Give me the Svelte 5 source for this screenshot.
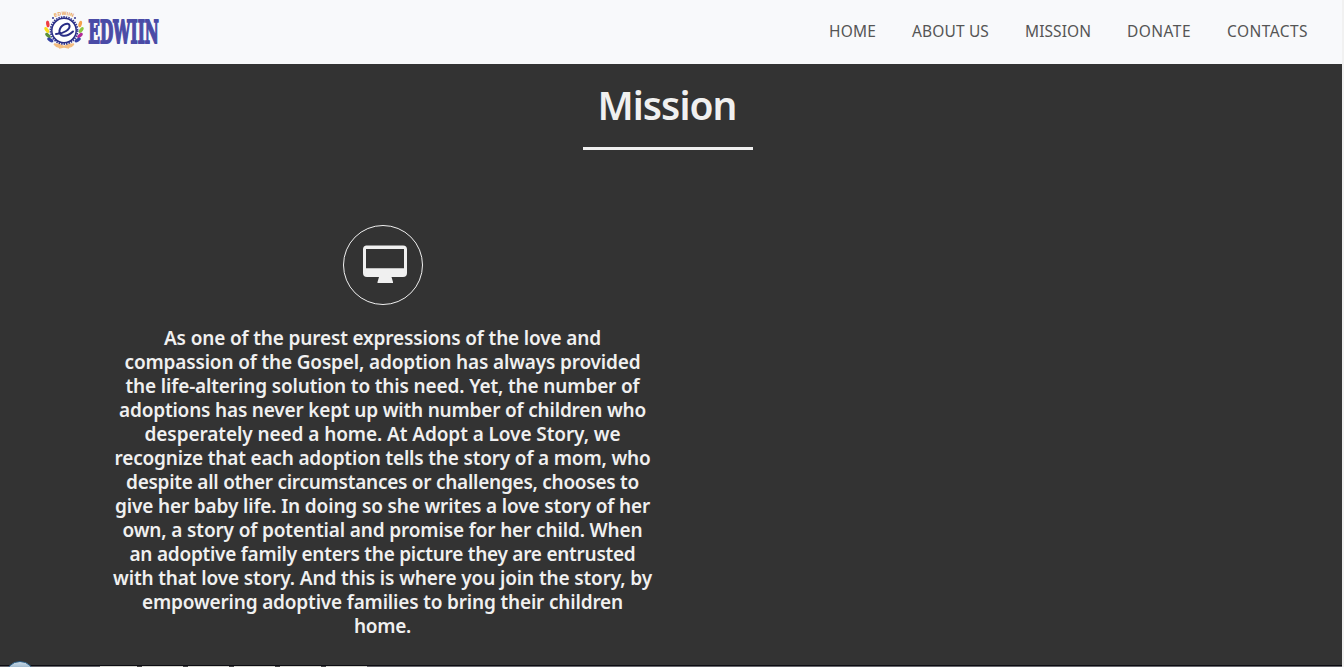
<script>
  const links = [
    { label: 'HOME', width: 47 },
    { label: 'ABOUT US', width: 77 },
    { label: 'MISSION', width: 66 },
    { label: 'DONATE', width: 64 },
    { label: 'CONTACTS', width: 81 }
  ];
  const lines = [
    { text: 'As one of the purest expressions of the love and', width: 437 },
    { text: 'compassion of the Gospel, adoption has always provided', width: 516 },
    { text: 'the life-altering solution to this need. Yet, the number of', width: 514 },
    { text: 'adoptions has never kept up with number of children who', width: 527 },
    { text: 'desperately need a home. At Adopt a Love Story, we', width: 476 },
    { text: 'recognize that each adoption tells the story of a mom, who', width: 536 },
    { text: 'despite all other circumstances or challenges, chooses to', width: 513 },
    { text: 'give her baby life. In doing so she writes a love story of her', width: 535 },
    { text: 'own, a story of potential and promise for her child. When', width: 520 },
    { text: 'an adoptive family enters the picture they are entrusted', width: 506 },
    { text: 'with that love story. And this is where you join the story, by', width: 539 },
    { text: 'empowering adoptive families to bring their children', width: 481 },
    { text: 'home.', width: 57 }
  ];
  const leaves = [
    { x: 3.8, y: 16, r: -8, c: '#ef3e42' },
    { x: 2.8, y: 22, r: -35, c: '#f8dc18' },
    { x: 4, y: 27.5, r: -48, c: '#5b8f3d' },
    { x: 6.3, y: 32, r: -60, c: '#3443a5' },
    { x: 36.2, y: 16, r: 15, c: '#f4a24a' },
    { x: 37.2, y: 22, r: 35, c: '#8bc63f' },
    { x: 36, y: 27.5, r: 48, c: '#b22b97' },
    { x: 33.7, y: 32, r: 60, c: '#3443a5' }
  ];
  const tiles = [37, 5, 41, 5, 41, 5, 41, 5, 41, 5, 41];

  // Tracks a run of text so that it fills the given measure.
  function fit(node, width) {
    const natural = node.getBoundingClientRect().width;
    node.style.letterSpacing = `${(width - natural) / node.textContent.length}px`;
  }
</script>

<div class="page">
  <header>
    <svg class="logo" width="126" height="44" viewBox="0 0 126 44">
      {#each leaves as l}
        <ellipse cx={l.x} cy={l.y} rx="1.7" ry="3.4" fill={l.c} transform={`rotate(${l.r} ${l.x} ${l.y})`} />
      {/each}
      <path d="M10 36q6 0 9 2-5 3-9-2m20 0q-6 0-9 2 5 3 9-2M15 40l9-2m1 2-9-2" fill="#f3bd80" stroke="#f3bd80" stroke-width="1.5" />
      <circle cx="20" cy="22.500" r="13.500" fill="none" stroke="#34378f" stroke-width="1.800" stroke-dasharray="1.5 1" />
      <circle cx="20" cy="22.500" r="12.200" fill="#fff" stroke="#292d85" stroke-width="1.500" />
      <path d="M12 26c7 0 14.500-4.500 13.500-8.500s-9-.5-10 5 6 8 13.500 1" fill="none" stroke="#292d85" stroke-width="2" stroke-linecap="round" />
      <path id="arch" d="M8 10.500Q20 3.500 32 10.500" fill="none" />
      <text class="arch-text"><textPath href="#arch" startOffset="50%" text-anchor="middle">EDWIIN</textPath></text>
      <circle cx="9" cy="10" r="1" fill="#34378f" />
      <circle cx="31" cy="10" r="1" fill="#34378f" />
      <text class="brand" x="44.300" y="35.300" textLength="70.500" lengthAdjust="spacingAndGlyphs">EDWIIN</text>
    </svg>
    <nav>
      {#each links as l}
        <a href="#top" style:width={`${l.width}px`}><span use:fit={l.width}>{l.label}</span></a>
      {/each}
    </nav>
  </header>

  <main>
    <h1><span use:fit={139}>Mission</span></h1>
    <div class="rule"></div>
    <section>
      <div class="badge">
        <svg width="46" height="40" viewBox="0 0 46 40">
          <path fill="#f0f0f0" fill-rule="evenodd" d="M4 .5h37a4 4 0 0 1 4 4V28a4 4 0 0 1-4 4H29.500l1.500 5v1H15.500v-1l1.500-5H5a4 4 0 0 1-4-4V4.500a4 4 0 0 1 3-4ZM4 4v19.300h38V4Z" />
        </svg>
      </div>
      <p>
        {#each lines as l}
          <span class="line"><span use:fit={l.width}>{l.text}</span></span>
        {/each}
      </p>
    </section>
  </main>

  <footer>
    <div class="tiles">
      {#each tiles as w, i}
        <i class:light={i % 2 === 0} style:width={`${w}px`}></i>
      {/each}
    </div>
    <div class="orb"></div>
  </footer>
</div>

<style>
  :global(body) { background: #f1f1f1; overflow: hidden; }
  .page {
    width: 1342px;
    height: 667px;
    display: flex;
    flex-direction: column;
    overflow: hidden;
    background: #333;
    color: #f0f0f0;
    font-family: "Noto Sans", "Open Sans", sans-serif;
  }
  header {
    height: 64px;
    flex: none;
    box-sizing: border-box;
    padding: 0 34px 0 44px;
    display: flex;
    align-items: center;
    justify-content: space-between;
    background: #f8f9fb;
  }
  .logo { display: block; margin-bottom: 4px; overflow: visible; }
  .arch-text { font: bold 5px "Liberation Sans", sans-serif; fill: #e8a052; letter-spacing: 0.2px; }
  .brand { font: bold 31px "DejaVu Serif", serif; fill: #4a4ba6; stroke: #4a4ba6; stroke-width: 1.8; }
  nav { display: flex; gap: 36px; margin-bottom: 2px; }
  a { color: #555; text-decoration: none; font-size: 15.500px; line-height: 24px; white-space: nowrap; }
  main { flex: 1; display: flex; flex-direction: column; min-height: 0; }
  h1 {
    margin: 17px 0 0;
    padding-right: 8px;
    text-align: center;
    font-size: 39px;
    font-weight: 600;
    line-height: 48px;
  }
  .rule { width: 170px; height: 3px; margin: 18px 0 0 583px; background: #f0f0f0; }
  section { width: 570px; margin: 75px 0 0 98px; display: flex; flex-direction: column; align-items: center; }
  .badge {
    width: 80px;
    height: 80px;
    box-sizing: border-box;
    border: 1px solid #f0f0f0;
    border-radius: 50%;
    display: flex;
    align-items: center;
    justify-content: center;
    padding-left: 4px;
  }
  p { margin: 21px 0 0; padding-right: 1px; font-size: 19px; font-weight: 600; line-height: 24px; text-align: center; }
  .line { display: block; white-space: nowrap; }
  footer { flex: none; height: 2px; box-sizing: border-box; border-top: 1px solid #0c0c12; background: #66666b; position: relative; }
  .tiles { display: flex; margin-left: 100px; }
  .tiles i { height: 1px; background: #444; }
  .tiles .light { background: #d6d6d0; }
  .orb {
    position: absolute;
    left: 5px;
    top: -5px;
    width: 30px;
    height: 30px;
    border-radius: 50%;
    box-sizing: border-box;
    border: 1px solid #2b5f88;
    background: linear-gradient(#c9d9e6, #8aa9c2 8px);
  }
</style>
